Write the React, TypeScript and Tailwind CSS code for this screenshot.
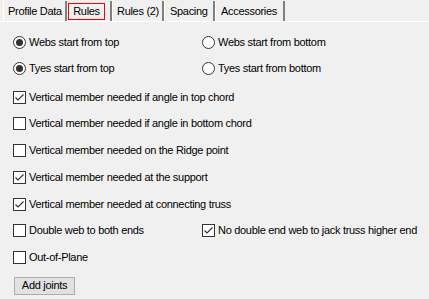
import React from "react";

const font = { fontFamily: '"Liberation Sans", Arial, sans-serif' };

function Radio({ checked, label }: { checked?: boolean; label: string }) {
  return (
    <div className="flex items-center h-[14px]">
      <svg width="13" height="13" viewBox="0 0 13 13" className="shrink-0">
        <circle cx="6.5" cy="6.5" r="6" fill="#fff" stroke="#333" strokeWidth="1" />
        {checked && <circle cx="6.5" cy="6.5" r="3.5" fill="#333" />}
      </svg>
      <span className="ml-[3px] text-[11px] tracking-[-0.3px] whitespace-nowrap text-[#000] leading-none">{label}</span>
    </div>
  );
}

function Check({ checked, label }: { checked?: boolean; label: string }) {
  return (
    <div className="flex items-center h-[14px]">
      <svg width="13" height="13" viewBox="0 0 13 13" className="shrink-0">
        <rect x="0.5" y="0.5" width="12" height="12" fill="#fff" stroke="#333" strokeWidth="1" />
        {checked && (
          <path d="M2.5 6.5 L5 9 L10.5 3.5" fill="none" stroke="#333" strokeWidth="1.2" />
        )}
      </svg>
      <span className="ml-[3px] text-[11px] tracking-[-0.3px] whitespace-nowrap text-[#000] leading-none">{label}</span>
    </div>
  );
}

export default function App() {
  return (
    <div className="w-[429px] h-[299px] bg-[#f0f0f0] overflow-hidden" style={font}>
      <div className="flex pl-[3px] pt-[1px] h-[21px] items-end text-[11px] tracking-[-0.3px] text-black whitespace-nowrap">
        <div className="w-[64px] h-[20px] flex items-center border-l border-white border-r-2 border-r-[#808080] pl-[4px]">
          Profile Data
        </div>
        <div className="w-[45px] h-[20px] flex items-center border-r-2 border-r-[#808080] pl-[1px]">
          <span className="border border-[#ff0000] w-[37px] h-[17px] flex items-center justify-center mt-[1px]">Rules</span>
        </div>
        <div className="w-[52px] h-[20px] flex items-center border-l border-white border-r-2 border-r-[#808080] pl-[4px]">
          Rules (2)
        </div>
        <div className="w-[51px] h-[20px] flex items-center border-l border-white border-r-2 border-r-[#808080] pl-[5px]">
          Spacing
        </div>
        <div className="w-[70px] h-[20px] flex items-center border-l border-white border-r-2 border-r-[#808080] pl-[5px]">
          Accessories
        </div>
      </div>
      <div className="border-t border-white pl-[13px] pt-[13px]">
        <div className="grid grid-cols-[189px_1fr] gap-y-[12px]">
          <Radio checked label="Webs start from top" />
          <Radio label="Webs start from bottom" />
          <Radio checked label="Tyes start from top" />
          <Radio label="Tyes start from bottom" />
        </div>
        <div className="flex flex-col gap-[12.75px] mt-[15px]">
          <Check checked label="Vertical member needed if angle in top chord" />
          <Check label="Vertical member needed if angle in bottom chord" />
          <Check label="Vertical member needed on the Ridge point" />
          <Check checked label="Vertical member needed at the support" />
          <Check checked label="Vertical member needed at connecting truss" />
          <div className="grid grid-cols-[189px_1fr]">
            <Check label="Double web to both ends" />
            <Check checked label="No double end web to jack truss higher end" />
          </div>
          <Check label="Out-of-Plane" />
        </div>
        <button className="mt-[12px] ml-[1px] w-[61px] h-[18px] border border-[#adadad] bg-[#e1e1e1] text-[11px] tracking-[-0.3px] text-black leading-none flex items-center justify-center">
          Add joints
        </button>
      </div>
    </div>
  );
}
